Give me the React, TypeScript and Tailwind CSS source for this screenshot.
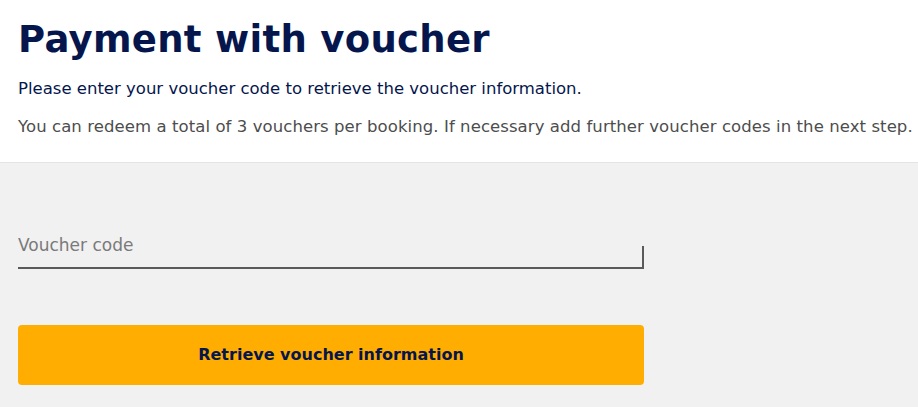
function App() {
  return (
    <div className="w-[918px] h-[407px] bg-[#f1f1f1] overflow-hidden">
      <div className="bg-white px-[18px] pt-[16px] pb-[24px] border-b border-[#e4e4e4]">
        <h1 className="font-['DejaVu_Sans',sans-serif] font-bold text-[37px] leading-[48px] tracking-[0.3px] text-[#05164d]">
          Payment with voucher
        </h1>
        <p className="mt-[14px] font-['DejaVu_Sans',sans-serif] text-[16.5px] leading-[22px] text-[#05164d] whitespace-nowrap">
          Please enter your voucher code to retrieve the voucher information.
        </p>
        <p className="mt-[16px] font-['DejaVu_Sans',sans-serif] text-[16.5px] leading-[22px] tracking-[0.08px] text-[#4d4d4d] whitespace-nowrap">
          You can redeem a total of 3 vouchers per booking. If necessary add further voucher codes in the next step.
        </p>
      </div>
      <div className="px-[18px] pt-[67px]">
        <div className="w-[626px] h-[39px] flex items-end border-b-2 border-[#5a5a5a]">
          <input
            type="text"
            placeholder="Voucher code"
            className="flex-1 h-full bg-transparent outline-none pb-[7px] font-['DejaVu_Sans',sans-serif] text-[17px] text-[#333] placeholder:text-[#7a7a7a]"
          />
          <div className="w-[2px] h-[21px] bg-[#5a5a5a]" />
        </div>
        <button className="mt-[56px] w-[626px] h-[60px] rounded-[4px] bg-[#ffad00] font-['DejaVu_Sans',sans-serif] font-bold text-[16px] text-[#05164d]">
          Retrieve voucher information
        </button>
      </div>
    </div>
  );
}

export default App;
